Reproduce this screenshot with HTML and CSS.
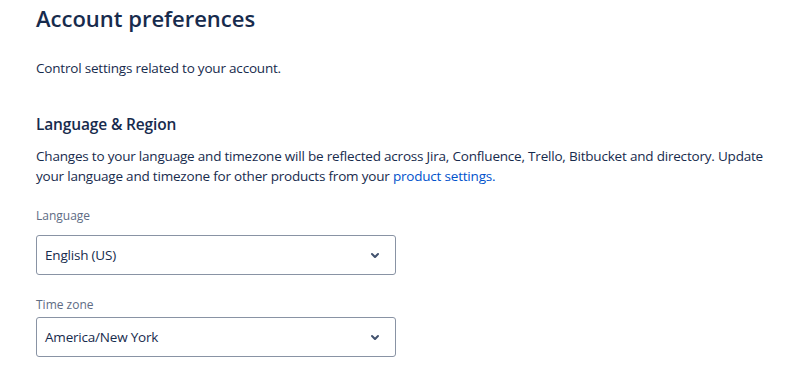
FILE: index.html
```html
<!DOCTYPE html>
<html lang="en">
<head>
    <meta charset="UTF-8">
    <meta name="viewport" content="width=device-width, initial-scale=1.0">
    <title>Account preferences</title>
    <link rel="stylesheet" href="styles.css">
</head>
<body>
    <div class="page">
        <h1 class="page-title">Account preferences</h1>
        <p class="page-intro">Control settings related to your account.</p>

        <section class="section">
            <h2 class="section-title">Language &amp; Region</h2>
            <p class="section-text">Changes to your language and timezone will be reflected across Jira, Confluence, Trello, Bitbucket and directory. Update your language and timezone for other products from your <a href="#" class="link">product settings.</a></p>

            <div class="field field-language">
                <label class="field-label">Language</label>
                <div class="select">
                    <span class="select-value">English (US)</span>
                    <svg class="chevron" width="24" height="24" viewBox="0 0 24 24"><path fill="#42526E" d="M8.292 10.293a1.009 1.009 0 000 1.419l2.939 2.965c.218.215.5.322.779.322s.556-.107.769-.322l2.93-2.955a1.01 1.01 0 000-1.419.987.987 0 00-1.406 0l-2.298 2.317-2.307-2.327a.99.99 0 00-1.406 0z"/></svg>
                </div>
            </div>

            <div class="field field-timezone">
                <label class="field-label">Time zone</label>
                <div class="select">
                    <span class="select-value">America/New York</span>
                    <svg class="chevron" width="24" height="24" viewBox="0 0 24 24"><path fill="#42526E" d="M8.292 10.293a1.009 1.009 0 000 1.419l2.939 2.965c.218.215.5.322.779.322s.556-.107.769-.322l2.93-2.955a1.01 1.01 0 000-1.419.987.987 0 00-1.406 0l-2.298 2.317-2.307-2.327a.99.99 0 00-1.406 0z"/></svg>
                </div>
            </div>
        </section>
    </div>
</body>
</html>
```

FILE: styles.css
```css
body {
    margin: 0;
    background: #fff;
    color: #172B4D;
    font-family: 'Open Sans', 'Noto Sans', sans-serif;
    font-size: 13.5px;
    letter-spacing: -0.2px;
    line-height: 20px;
}

.page {
    padding: 0 0 0 36px;
    width: 745px;
}

.page-title {
    margin: 4px 0 0;
    font-size: 22px;
    letter-spacing: 0;
    line-height: 28px;
    font-weight: 600;
}

.page-intro {
    margin: 26px 0 0;
}

.section {
    margin-top: 36px;
}

.section-title {
    margin: 0;
    font-size: 15.5px;
    letter-spacing: -0.15px;
    line-height: 20px;
    font-weight: 600;
}

.section-text {
    margin: 12px 0 0;
}

.link {
    color: #0052CC;
    text-decoration: none;
}

.field-label {
    display: block;
    font-size: 12px;
    letter-spacing: 0;
    line-height: 16px;
    color: #5E6C84;
}

.field-language {
    margin-top: 22px;
}

.field-language .field-label {
    margin-bottom: 11px;
}

.field-timezone {
    margin-top: 22px;
}

.field-timezone .field-label {
    margin-bottom: 4px;
}

.select {
    display: flex;
    align-items: center;
    justify-content: space-between;
    width: 360px;
    height: 40px;
    box-sizing: border-box;
    padding: 0 8px 0 8px;
    border: 1px solid #8993A4;
    border-radius: 3px;
}

.select-value {
    font-size: 13.5px;
}
```
